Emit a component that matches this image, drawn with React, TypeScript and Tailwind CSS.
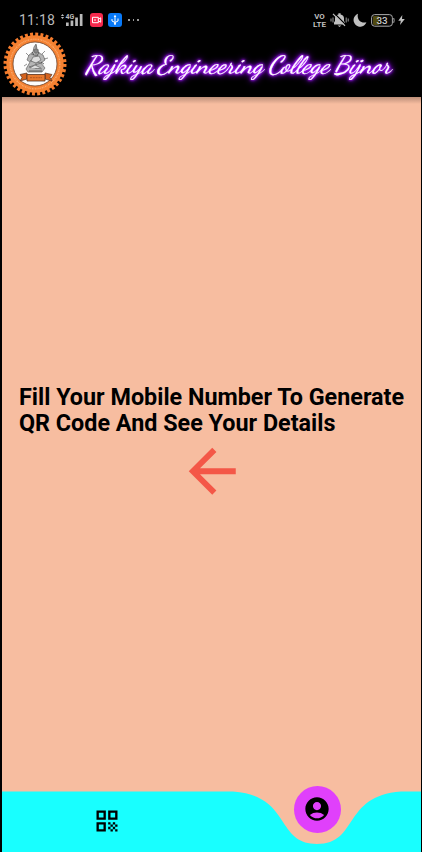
import { MdQrCode } from "react-icons/md";

function Emblem() {
  return (
    <svg viewBox="0 0 66 64" className="h-[64px] w-[66px] shrink-0">
      <circle cx="33" cy="32" r="29.5" fill="none" stroke="#f47b2c" strokeWidth="4" strokeDasharray="2.9 2.25" />
      <circle cx="33" cy="32" r="28.7" fill="#f58232" />
      <circle cx="33" cy="32" r="24.8" fill="none" stroke="#ffd0a4" strokeWidth="1.4" strokeDasharray="1.2 .9 .7 .6" opacity=".5" />
      <circle cx="33" cy="32" r="22" fill="#fdfdfd" stroke="#68402b" strokeWidth=".8" />
      <g stroke="#666" strokeWidth=".7" fill="#b5b5b5">
        <path d="M34 12l-2 3-1 5-4 3-2 5 3 2-4 7 2 3h14l3-4-4-5 4-3-2-5-4-2-2-4z" />
        <path d="M31 18h6M29 22l8 3-9 4 11 2-12 4 13 2M34 13v24M40 22l3-3M42 27l4-1M27 24l-3-3M25 32l-3 2" fill="none" />
        <circle cx="34" cy="19" r="2" fill="#888" />
        <path d="M31 25l-2 4 5 2 5-3-2-4zM28 36l5-3 6 3" fill="#ddd" />
        <path d="M30 20l2 3M37 20l-2 4M39 30l3 2M27 39h13" fill="none" stroke="#333" />
      </g>
      <path d="M18 42.5l7-1.5v6l-7 2 2-3.5zM50 42.5L43 41v6l7 2-2-3.5z" fill="#d5631e" stroke="#543020" strokeWidth=".7" />
      <path d="M25 42.5h18v6.5H25z" fill="#e8792d" stroke="#543020" strokeWidth=".8" />
      <path d="M28 45.7h12" stroke="#b4551f" strokeDasharray="2 .8" />
    </svg>
  );
}

function StatusBar() {
  return (
    <div className="flex h-[32px] items-center pt-[8px] pl-[19px] pr-[17px] text-[#b9b9b9]">
      <span className="w-[37px] whitespace-nowrap font-[Roboto] text-[14px] leading-4 tracking-[0.25px]">11:18</span>
      <svg className="ml-[4px] h-[16px] w-[24px]" viewBox="0 0 24 16" fill="#b9b9b9">
        <path d="M2.5 2l1.6 2H.9zM2.5 7L.9 5h3.2z" />
        <text x="5.5" y="7" fontSize="7" fontWeight="700" fontFamily="Roboto, sans-serif">4G</text>
        <path d="M6 10.5h2.7V14H6zM10.6 8.5h2.7V14h-2.7zM15.2 5.5h2.7V14h-2.7zM19.8 2h2.7v12h-2.7z" />
      </svg>
      <svg className="ml-[6px] h-[14px] w-[13px]" viewBox="0 0 13 14">
        <rect width="13" height="14" rx="3" fill="#f5294c" />
        <path d="M2.5 4.3h5.8v5.4H2.5zM8.3 6.3l2.4-1.5v4.4L8.3 7.8M4 7h2" fill="none" stroke="#fff" />
      </svg>
      <svg className="ml-[5px] h-[14px] w-[14px]" viewBox="0 0 14 14">
        <rect width="14" height="14" rx="3" fill="#0879f7" />
        <path d="M7 2.5v8M4 6v2l3 1.5L10 8V5.5" fill="none" stroke="#fff" />
        <path d="M5.7 4L7 2l1.3 2z" fill="#fff" />
        <circle cx="7" cy="10.8" r="1.1" fill="#fff" />
      </svg>
      <div className="ml-[6px] flex gap-[3px]">
        <i className="h-[1.5px] w-[1.5px] bg-[#999]" />
        <i className="h-[1.5px] w-[1.5px] bg-[#999]" />
        <i className="h-[1.5px] w-[1.5px] bg-[#999]" />
      </div>
      <svg className="ml-auto h-[16px] w-[13px] overflow-visible" viewBox="0 0 13 16" fill="#c4c4c4" fontFamily="Roboto, sans-serif" fontSize="8" fontWeight="600">
        <text x="1.2" y="7.2" textLength="10.5" lengthAdjust="spacingAndGlyphs">VO</text>
        <text x="0" y="15" textLength="13" lengthAdjust="spacingAndGlyphs">LTE</text>
      </svg>
      <svg className="ml-[4px] h-[16px] w-[19px]" viewBox="0 0 19 16">
        <path d="M4 12.5V10.5l1-1.5V6.2Q5.2 3 8.4 2.4V1.2h2.2v1.2q3.2.6 3.4 3.8V9l1 1.5v2zM7.7 13.5h3.6l-1.8 1.5z" fill="#c0c0c0" />
        <path d="M1 6.5v3M3 5.5v5M16.2 5.5v5M18.2 6.5v3" stroke="#999" />
        <path d="M4 1l12 12" stroke="#000" strokeWidth="1.1" />
        <path d="M3 1.8l12 12" stroke="#c0c0c0" strokeWidth="1.2" />
      </svg>
      <svg className="ml-[4px] h-[14px] w-[14px]" viewBox="0 0 14 14">
        <path d="M5 .8A6.6 6.6 0 1 0 13.4 9.2C8 11 3.4 6.5 5 .8z" fill="#c0c0c0" />
      </svg>
      <svg className="ml-[4px] h-[13px] w-[24px]" viewBox="0 0 24 13">
        <rect x=".6" y=".6" width="20.8" height="11.6" rx="3" fill="#080808" stroke="#aaa" />
        <path d="M3 2h5v9H3q-1 0-1-1V3q0-1 1-1z" fill="#504910" />
        <path d="M22.7 4q1 2.4 0 4.8" fill="none" stroke="#aaa" />
        <text x="11" y="9.9" textAnchor="middle" fontFamily="Roboto, sans-serif" fontSize="9.8" fontWeight="500" fill="#ccc">33</text>
      </svg>
      <svg className="ml-[3px] h-[10px] w-[7px]" viewBox="0 0 7 10">
        <path d="M4.3 0L.3 5.7h2.5L2 10l4.8-6H4z" fill="#c0c0c0" />
      </svg>
    </div>
  );
}

function Title() {
  return (
    <svg
      className="h-[44px] w-[330px] overflow-visible [filter:drop-shadow(0_0_1px_#b526ff)_drop-shadow(0_0_1.5px_#9b16f5)_drop-shadow(0_0_3px_#7200c9)]"
      viewBox="75 44 330 44"
      fill="#fff"
      stroke="#fff"
      strokeWidth=".2"
      fontFamily="'Dancing Script', Pacifico, Lato, sans-serif"
      fontStyle="italic"
      fontWeight="400"
      fontSize="25"
    >
      <text x="85" y="72.5" textLength="68" lengthAdjust="spacingAndGlyphs">Rajkiya</text>
      <text x="157" y="72.5" textLength="106" lengthAdjust="spacingAndGlyphs">Engineering</text>
      <text x="268" y="72.5" textLength="61" lengthAdjust="spacingAndGlyphs">College</text>
      <text x="334" y="72.5" textLength="57" lengthAdjust="spacingAndGlyphs">Bijnor</text>
    </svg>
  );
}

function BottomNav() {
  return (
    <nav className="relative h-[67px]">
      <svg className="absolute inset-x-0 bottom-0 h-[61px] w-full" viewBox="2 791 419 61" preserveAspectRatio="none">
        <path d="M2 791.5H233C292 796 275 844 317 844S342 796 401 791.5H421V852H2z" fill="#18ffff" />
      </svg>
      <div className="relative flex">
        <div className="flex w-[210px] justify-center pt-[22px]">
          <MdQrCode className="h-[28px] w-[28px] text-black" />
        </div>
        <div className="mt-[0.5px] ml-[81.5px] flex h-[47px] w-[47px] items-center justify-center rounded-full bg-[#e040fb]">
          <svg className="h-[28px] w-[28px]" viewBox="0 0 24 24">
            <path
              fillRule="evenodd"
              d="M12 2C6.48 2 2 6.48 2 12s4.48 10 10 10 10-4.48 10-10S17.52 2 12 2zm0 4c1.93 0 3.5 1.57 3.5 3.5S13.93 13 12 13s-3.5-1.57-3.5-3.5S10.07 6 12 6zm0 14c-2.03 0-4.43-.82-6.14-2.88a9.947 9.947 0 0 1 12.28 0C16.43 19.18 14.03 20 12 20z"
            />
          </svg>
        </div>
      </div>
    </nav>
  );
}

export default function App() {
  return (
    <div className="flex h-[852px] w-[422px] flex-col overflow-hidden bg-black">
      <header className="h-[97px] shrink-0">
        <StatusBar />
        <div className="flex h-[65px] pl-[2px]">
          <Emblem />
          <div className="pt-[12px] pl-[7px]">
            <Title />
          </div>
        </div>
      </header>
      <main className="mr-px ml-[2px] flex flex-1 flex-col bg-[#f7bda0]">
        <div className="h-[7px] bg-linear-to-b from-[#bd8f79] to-[#f7bda0]" />
        <div className="flex-1 pt-[280px]">
          <h1 className="ml-[17px] font-[Roboto] text-[23.35px] leading-[26.4px] font-bold whitespace-nowrap text-black">
            Fill Your Mobile Number To Generate
            <br />
            QR Code And See Your Details
          </h1>
          <svg className="-mt-[1px] ml-[174.5px] h-[70.5px] w-[70.5px]" viewBox="0 0 24 24" fill="#f45747">
            <path d="M20 11H7.83l5.59-5.59L12 4l-8 8 8 8 1.41-1.41L7.83 13H20v-2z" />
          </svg>
        </div>
        <BottomNav />
      </main>
    </div>
  );
}
